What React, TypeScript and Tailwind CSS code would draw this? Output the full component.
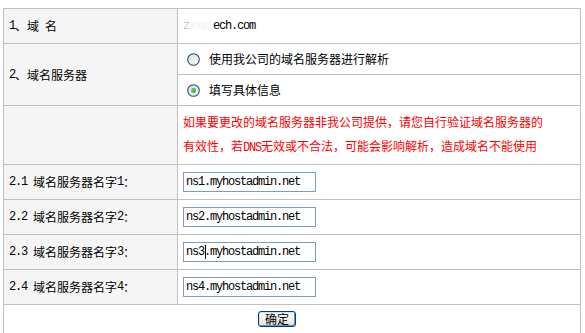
import React from "react";

const M = ({ children }: { children: React.ReactNode }) => (
  <span className="font-[family-name:'Liberation_Mono',monospace] tracking-[-1.2px] whitespace-pre">{children}</span>
);

const Radio = ({ checked }: { checked?: boolean }) => (
  <svg width="13" height="13" viewBox="0 0 13 13" className="shrink-0">
    <defs>
      <linearGradient id={checked ? "rg1" : "rg0"} x1="0" y1="0" x2="1" y2="1">
        <stop offset="0" stopColor="#dcdcd4" />
        <stop offset="1" stopColor="#ffffff" />
      </linearGradient>
      <radialGradient id="dot" cx="0.4" cy="0.4" r="0.6">
        <stop offset="0" stopColor="#7ce07c" />
        <stop offset="1" stopColor="#1a9a1a" />
      </radialGradient>
    </defs>
    <circle cx="6.5" cy="6.5" r="5.8" fill={`url(#${checked ? "rg1" : "rg0"})`} stroke="#1c5180" strokeWidth="1.1" />
    {checked && <circle cx="6.5" cy="6.5" r="2.4" fill="url(#dot)" />}
  </svg>
);

const Box = ({ value, caret }: { value: string; caret?: number }) => (
  <div className="relative h-[20px] w-[133px] border border-[#7f9db9] bg-white pl-[2px] flex items-center text-black">
    <M>{value}</M>
    {caret !== undefined && (
      <span className="absolute top-[2px] h-[14px] w-px bg-black" style={{ left: 3 + caret * 6 }} />
    )}
  </div>
);

const lab = "w-[174px] shrink-0 bg-[#f5f5f5] border-r border-b border-[#c0c0c0] pl-[5px] flex items-center";
const val = "flex-1 border-r border-b border-[#c0c0c0] flex items-center";

export default function App() {
  return (
    <div className="min-h-screen bg-white pt-[8px] pl-[3px] font-[family-name:'Noto_Sans_CJK_SC',sans-serif] text-[12px] text-black">
      <div className="w-[578px] border-t border-l border-[#c0c0c0]">
        <div className="flex h-[35px]">
          <div className={lab}>
            <M>1</M>、域<M> </M>名
          </div>
          <div className={val + " pl-[5px]"}>
            <M>
              <span className="text-[#c8c8c8]">z</span>
              <span className="text-[#ececec] blur-[1px]">xxxt</span>
              <span className="text-black">ech.com</span>
            </M>
          </div>
        </div>
        <div className="flex h-[62px]">
          <div className={lab}>
            <M>2</M>、域名服务器
          </div>
          <div className="flex-1 flex flex-col">
            <div className={val + " h-[31px] pl-[9px] gap-[9px]"}>
              <Radio />
              <span>使用我公司的域名服务器进行解析</span>
            </div>
            <div className={val + " h-[31px] pl-[9px] gap-[9px]"}>
              <Radio checked />
              <span>填写具体信息</span>
            </div>
          </div>
        </div>
        <div className="flex h-[59px]">
          <div className={lab}></div>
          <div className={val + " pl-[5px] text-[#ff0000] leading-[24px]"}>
            <div>
              如果要更改的域名服务器非我公司提供，请您自行验证域名服务器的
              <br />
              有效性，若<M>DNS</M>无效或不合法，可能会影响解析，造成域名不能使用
            </div>
          </div>
        </div>
        {[1, 2, 3, 4].map((n) => (
          <div key={n} className="flex h-[35px]">
            <div className={lab}>
              <M>{`2.${n} `}</M>域名服务器名字<M>{String(n)}</M>：
            </div>
            <div className={val + " pl-[5px]"}>
              <Box value={`ns${n}.myhostadmin.net`} caret={n === 3 ? 3 : undefined} />
            </div>
          </div>
        ))}
        <div className="flex h-[34px] border-r border-b border-[#c0c0c0] pl-[254px] pt-[6px]">
          <button className="h-[16px] w-[38px] rounded-[3px] border border-[#003c74] bg-gradient-to-b from-white to-[#e6e3d6] shadow-[inset_-1px_-1px_0_#6a8fd0,inset_1px_1px_0_#cfe0fb] text-[12px] leading-[14px] text-black flex items-center justify-center">
            确定
          </button>
        </div>
      </div>
    </div>
  );
}
